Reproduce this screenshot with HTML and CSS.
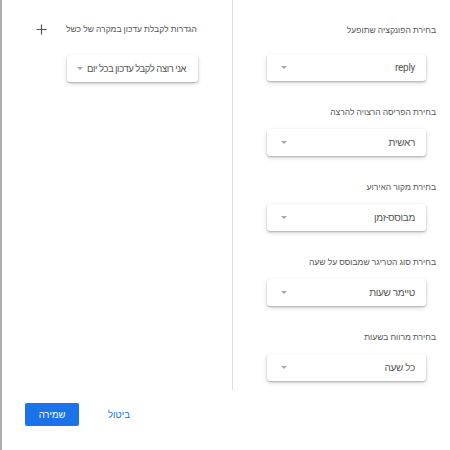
FILE: index.html
```html
<!DOCTYPE html>
<html dir="rtl" lang="he">
<head>
<meta charset="utf-8">
<link rel="stylesheet" href="styles.css">
</head>
<body>
<div class="page">
  <div class="main">
    <section class="col col-right">
      <div class="field first">
        <div class="label">בחירת הפונקציה שתופעל</div>
        <div class="select"><span class="value">reply</span><span class="arrow"></span></div>
      </div>
      <div class="field">
        <div class="label">בחירת הפריסה הרצויה להרצה</div>
        <div class="select"><span class="value">ראשית</span><span class="arrow"></span></div>
      </div>
      <div class="field">
        <div class="label">בחירת מקור האירוע</div>
        <div class="select"><span class="value">מבוסס-זמן</span><span class="arrow"></span></div>
      </div>
      <div class="field">
        <div class="label">בחירת סוג הטריגר שמבוסס על שעה</div>
        <div class="select"><span class="value">טיימר שעות</span><span class="arrow"></span></div>
      </div>
      <div class="field">
        <div class="label">בחירת מרווח בשעות</div>
        <div class="select"><span class="value">כל שעה</span><span class="arrow"></span></div>
      </div>
    </section>
    <section class="col col-left">
      <div class="head">
        <div class="label">הגדרות לקבלת עדכון במקרה של כשל</div>
        <svg class="plus" width="11" height="11" viewBox="0 0 11 11"><path d="M5.5 0.5V10.5M0.5 5.5H10.5" stroke="#555" stroke-width="1.2" fill="none"/></svg>
      </div>
      <div class="select select-inline"><span class="value">אני רוצה לקבל עדכון בכל יום</span><span class="arrow"></span></div>
    </section>
  </div>
  <footer class="footer">
    <button class="btn btn-text">ביטול</button>
    <button class="btn btn-primary">שמירה</button>
  </footer>
</div>
</body>
</html>
```

FILE: styles.css
```css
html, body {
  margin: 0;
  padding: 0;
  background: #fff;
}
body {
  font-family: Roboto, "Liberation Sans", Arial, sans-serif;
  color: #3c4043;
}
.page {
  width: 450px;
  height: 450px;
  box-sizing: border-box;
  border-left: 2px solid #adadad;
  display: flex;
  flex-direction: column;
}
.main {
  display: flex;
  height: 390px;
}
.col-right {
  width: 218px;
  box-sizing: border-box;
  border-left: 1px solid #dcdcdc;
  padding-top: 24px;
  display: flex;
  flex-direction: column;
  gap: 25px;
}
.field {
  display: flex;
  flex-direction: column;
  gap: 11px;
}
.field.first {
  gap: 18px;
}
.label {
  font-size: 8.5px;
  line-height: 12px;
  height: 12px;
  color: #555;
  white-space: nowrap;
}
.col-right .label {
  padding-right: 14px;
}
.select {
  height: 27px;
  box-sizing: border-box;
  border-radius: 3px;
  background: #fff;
  box-shadow: 0 1px 2px rgba(0,0,0,0.26), 0 2px 5px rgba(0,0,0,0.13);
  display: flex;
  align-items: center;
  justify-content: space-between;
  padding: 0 11px 0 14px;
  font-size: 10px;
  letter-spacing: -0.3px;
  color: #555;
  white-space: nowrap;
}
.col-right .select {
  width: 159px;
  margin-right: 24px;
}
.arrow {
  flex: none;
  width: 0;
  height: 0;
  border-left: 3.5px solid transparent;
  border-right: 3.5px solid transparent;
  border-top: 3.5px solid #a8a8a8;
}
.col-left {
  flex: 1;
  padding-top: 23px;
}
.head {
  display: flex;
  align-items: center;
  justify-content: space-between;
  padding: 0 35px 0 34px;
}
.plus {
  display: block;
}
.select-inline {
  width: 131px;
  margin-right: 34px;
  margin-top: 20px;
  justify-content: flex-start;
  gap: 4px;
  padding: 0 12px 0 0;
  font-size: 9.5px;
  letter-spacing: -0.45px;
}
.footer {
  flex: 1;
  display: flex;
  justify-content: flex-end;
  align-items: flex-start;
  padding: 13px 0 0 23px;
  gap: 13px;
}
.btn {
  width: 54px;
  height: 23px;
  border: none;
  border-radius: 2px;
  font-family: Roboto, "Liberation Sans", Arial, sans-serif;
  font-size: 9.5px;
  padding: 0;
  cursor: pointer;
}
.btn-primary {
  background: #1a73e8;
  color: #fff;
}
.btn-text {
  background: transparent;
  color: #1a73e8;
}
```
